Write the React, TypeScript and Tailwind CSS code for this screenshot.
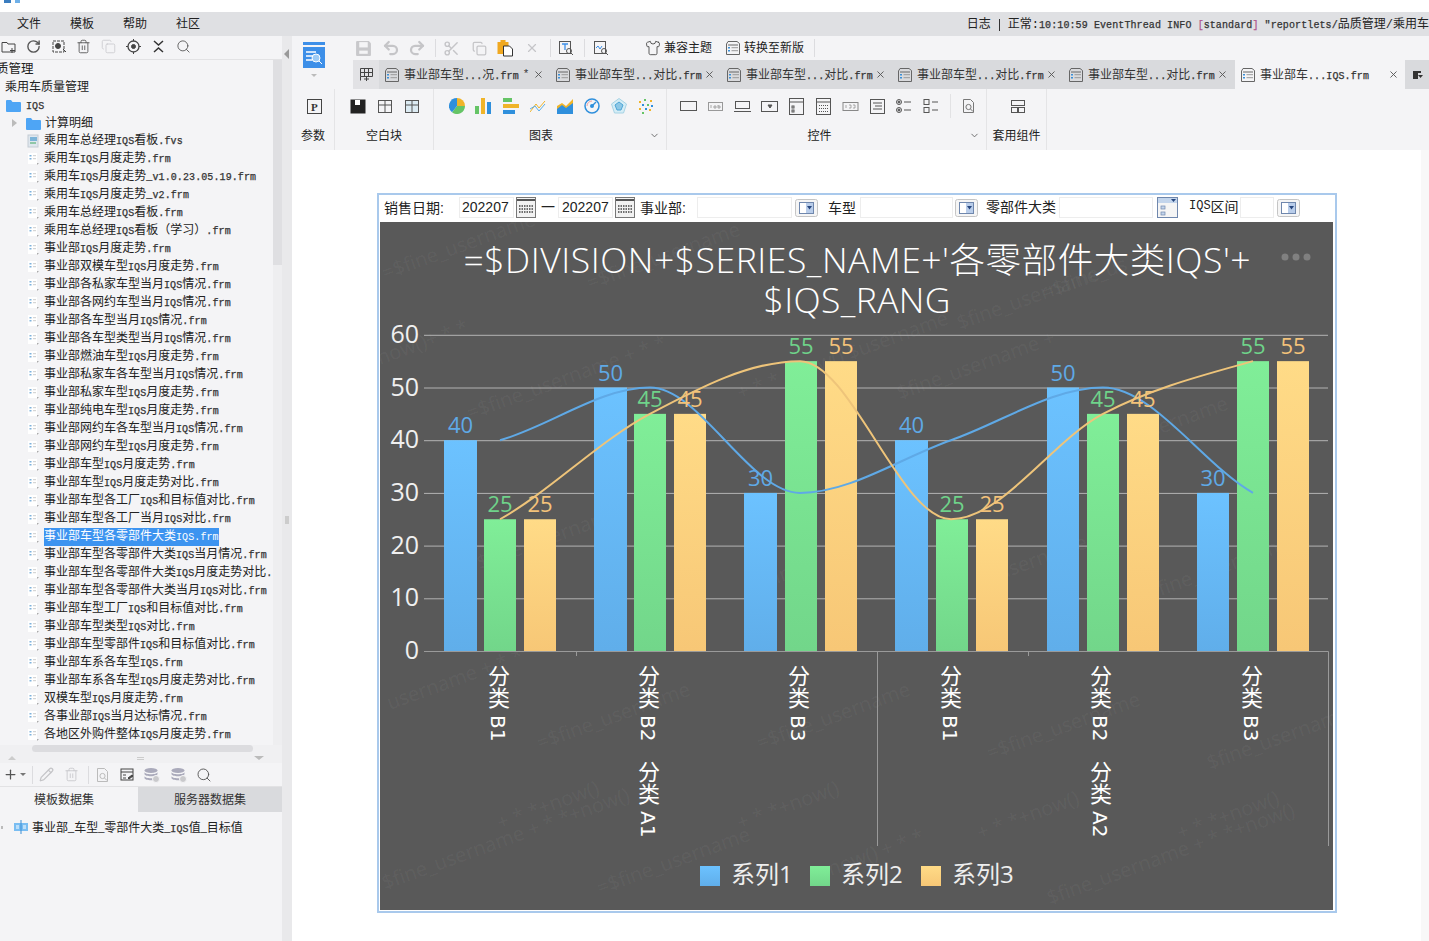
import React from "react";
import { RotateCw, Trash2, Copy, Search, X, Undo2, Redo2, Scissors, Pencil, ChevronDown, Plus, Shirt } from "lucide-react";

const UI = `"Liberation Mono","Noto Sans CJK SC",monospace`;

function T({ s }: { s: string }) {
  const parts = s.split(/([\x20-\x7e]+)/).filter(Boolean);
  return (
    <>
      {parts.map((p, i) =>
        /^[\x20-\x7e]+$/.test(p) ? (
          <span key={i} className="whitespace-pre text-[10px] tracking-[0.1px] text-[#333] [-webkit-text-stroke:0.25px_#333]">{p}</span>
        ) : (
          <span key={i}>{p}</span>
        )
      )}
    </>
  );
}

const files = [
  "乘用车总经理IQS看板.fvs","乘用车IQS月度走势.frm","乘用车IQS月度走势_v1.0.23.05.19.frm","乘用车IQS月度走势_v2.frm","乘用车总经理IQS看板.frm","乘用车总经理IQS看板（学习）.frm","事业部IQS月度走势.frm","事业部双模车型IQS月度走势.frm","事业部各私家车型当月IQS情况.frm","事业部各网约车型当月IQS情况.frm","事业部各车型当月IQS情况.frm","事业部各车型类型当月IQS情况.frm","事业部燃油车型IQS月度走势.frm","事业部私家车各车型当月IQS情况.frm","事业部私家车型IQS月度走势.frm","事业部纯电车型IQS月度走势.frm","事业部网约车各车型当月IQS情况.frm","事业部网约车型IQS月度走势.frm","事业部车型IQS月度走势.frm","事业部车型IQS月度走势对比.frm","事业部车型各工厂IQS和目标值对比.frm","事业部车型各工厂当月IQS对比.frm","事业部车型各零部件大类IQS.frm","事业部车型各零部件大类IQS当月情况.frm","事业部车型各零部件大类IQS月度走势对比.","事业部车型各零部件大类当月IQS对比.frm","事业部车型工厂IQS和目标值对比.frm","事业部车型类型IQS对比.frm","事业部车型零部件IQS和目标值对比.frm","事业部车系各车型IQS.frm","事业部车系各车型IQS月度走势对比.frm","双模车型IQS月度走势.frm","各事业部IQS当月达标情况.frm","各地区外购件整体IQS月度走势.frm",
];

function Folder() {
  return (
    <svg width="15" height="13" viewBox="0 0 15 13" className="shrink-0">
      <path d="M0 2a1 1 0 0 1 1-1h4l1.5 2H14a1 1 0 0 1 1 1v8a1 1 0 0 1-1 1H1a1 1 0 0 1-1-1z" fill="#4ea5f5" />
    </svg>
  );
}
function FileIco({ fvs }: { fvs?: boolean }) {
  return (
    <svg width="13" height="14" viewBox="0 0 13 14" className="shrink-0">
      {fvs ? (
        <>
          <rect x="1" y="1" width="10" height="12" fill="#dfe7ee" stroke="#c4ccd4" />
          <rect x="3" y="3" width="7" height="4" fill="#7db4d8" />
          <rect x="3" y="8" width="6" height="2" fill="#8fc7a8" />
        </>
      ) : (
        <>
          <rect x="1" y="1" width="9" height="11" fill="#fff" />
          <rect x="2.5" y="3" width="2" height="1.5" fill="#7fb2dc" />
          <rect x="2.5" y="6" width="2" height="1.5" fill="#7fb2dc" />
          <path d="M6 3.7h3M6 6.7h3" stroke="#ccc" />
          <path d="M10 11l2 0-2 2z" fill="#aaa" />
        </>
      )}
    </svg>
  );
}
function TabIco() {
  return (
    <svg width="16" height="16" viewBox="0 0 16 16" className="shrink-0" fill="none">
      <path d="M1.5 4V14.5H14.5V3.5L12 1.5H3L1.5 4" stroke="#666" />
      <path d="M3 5H13" stroke="#666" />
      <rect x="3" y="7" width="2" height="1.5" fill="#3b8fd8" />
      <rect x="3" y="10" width="2" height="1.5" fill="#3b8fd8" />
      <path d="M6.5 7.7H13M6.5 10.7H13" stroke="#999" />
    </svg>
  );
}
function Cell({ w = "w-[25px]", children }: { w?: string; children: React.ReactNode }) {
  return <span className={`flex shrink-0 items-center justify-center ${w}`}>{children}</span>;
}
function Sep() {
  return <span className="h-[18px] w-px shrink-0 bg-[#dcdcdf]" />;
}
function Doc({ c = "#777" }: { c?: string }) {
  return (
    <svg width="15" height="16" viewBox="0 0 15 16" fill="none" stroke={c}>
      <path d="M2.5 1.5H9.5L12.5 4.5V14.5H2.5z" />
      <circle cx="7.5" cy="9" r="2.6" />
      <path d="M9.5 11l2.5 2.5" />
    </svg>
  );
}
function Db({ c = "#aab" }: { c?: string }) {
  return (
    <svg width="17" height="16" viewBox="0 0 17 16">
      <ellipse cx="8" cy="3.5" rx="6.5" ry="2.5" fill={c} />
      <path d="M1.5 5c0 3 13 3 13 0v2c0 3-13 3-13 0zM1.5 9c0 3 13 3 13 0v2c0 3-13 3-13 0z" fill={c} />
      <circle cx="13" cy="12" r="3.5" fill="#c9c9cc" stroke="#f4f4f6" />
    </svg>
  );
}
function Lay({ kind }: { kind: number }) {
  return (
    <svg width="16" height="15" viewBox="0 0 16 15" fill="none" stroke="#555">
      <rect x="1.5" y="1.5" width="13" height="12" fill={kind === 2 ? "#dcebf3" : "none"} />
      {kind === 0 ? <rect x="1" y="1" width="14" height="13" fill="#222" stroke="#222" /> : null}
      {kind === 0 ? <rect x="5" y="1" width="5" height="5" fill="#fff" stroke="none" /> : null}
      {kind > 0 ? <path d="M1.5 6H14.5M8 1.5V13.5" /> : null}
    </svg>
  );
}

const Pie = () => (
  <svg width="16" height="16" viewBox="0 0 16 16">
    <path d="M8 8V0A8 8 0 0 1 16 8z" fill="#f0b429" />
    <path d="M8 8H16A8 8 0 0 1 3 14.2z" fill="#65c466" />
    <path d="M8 8L3 14.2A8 8 0 0 1 8 0z" fill="#2f8fdc" />
  </svg>
);
const Bars = () => (
  <svg width="17" height="16" viewBox="0 0 17 16">
    <rect x="0" y="8" width="4" height="8" fill="#65c466" />
    <rect x="6" y="0" width="4" height="16" fill="#f0b429" />
    <rect x="12" y="4" width="4" height="12" fill="#2f8fdc" />
  </svg>
);
const HBars = () => (
  <svg width="17" height="16" viewBox="0 0 17 16">
    <rect x="0" y="0" width="9" height="4" fill="#65c466" />
    <rect x="0" y="6" width="16" height="4" fill="#f0b429" />
    <rect x="0" y="12" width="12" height="4" fill="#2f8fdc" />
  </svg>
);
const LineI = () => (
  <svg width="16" height="14" viewBox="0 0 16 14" fill="none">
    <path d="M0 13L6 5 9 9 15 2" stroke="#f0b429" />
    <path d="M0 10L5 7 9 12 15 5" stroke="#5aaee8" />
  </svg>
);
const Area = () => (
  <svg width="17" height="16" viewBox="0 0 17 16">
    <path d="M0 8L5 5 9 8 16 1V16H0z" fill="#f0b429" />
    <path d="M0 11L5 7 9 10 16 5V16H0z" fill="#2f8fdc" />
  </svg>
);
const Gauge = () => (
  <svg width="16" height="16" viewBox="0 0 16 16" fill="none">
    <circle cx="8" cy="8" r="7" stroke="#2f8fdc" strokeWidth="1.5" />
    <circle cx="8" cy="8" r="2" fill="#2f8fdc" />
    <path d="M8 8L12 4" stroke="#2f8fdc" strokeWidth="1.5" />
    <path d="M3 8a5 5 0 0 1 5-5" stroke="#f0a0a0" />
  </svg>
);
const Radar = () => (
  <svg width="16" height="16" viewBox="0 0 16 16">
    <path d="M8 0.5L15.5 6 12.5 15H3.5L0.5 6z" fill="#d5edf6" stroke="#a6d2e4" />
    <path d="M8 4L12 7 10 12H6L4 7z" fill="#8ec8e6" stroke="#4ea5d6" />
  </svg>
);
const Scatter = () => (
  <svg width="16" height="16" viewBox="0 0 16 16">
    {[[2,3,"#f0b429"],[7,1,"#65c466"],[13,2,"#f0b429"],[5,6,"#2f8fdc"],[10,6,"#65c466"],[14,7,"#2f8fdc"],[2,10,"#f0b429"],[8,10,"#2f8fdc"],[12,11,"#f0b429"],[5,14,"#65c466"]].map(([x,y,c],i)=>(
      <rect key={i} x={x as number} y={y as number} width="2" height="2" fill={c as string} />
    ))}
  </svg>
);

function Ctl({ k }: { k: number }) {
  const s = "#555";
  return (
    <svg width="17" height="17" viewBox="0 0 17 17" fill="none" stroke={s}>
      {k === 0 && <rect x="0.5" y="3.5" width="16" height="9" />}
      {k === 1 && <><rect x="1.5" y="4.5" width="14" height="8" stroke="#999" /><path d="M4 7v3M7 8h2v2H7zM11 7v3h2V8h-2" stroke="#888" strokeWidth=".7" /></>}
      {k === 2 && <><rect x="1.5" y="3.5" width="14" height="7" /><path d="M0 13.5H17" /></>}
      {k === 3 && <><rect x="0.5" y="3.5" width="16" height="10" /><path d="M7 7h4l-2 3z" fill={s} /></>}
      {k === 4 && <><rect x="1.5" y="0.5" width="14" height="16" /><path d="M1.5 4H15.5" /><rect x="4" y="8" width="2" height="2" /><rect x="4" y="12" width="2" height="2" /></>}
      {k === 5 && <><rect x="1.5" y="0.5" width="14" height="16" /><path d="M1.5 4H15.5" /><path d="M4 7.5h9M4 10.5h9M4 13.5h9" strokeDasharray="1 1" /></>}
      {k === 6 && <><rect x="1" y="4.5" width="15" height="8" stroke="#888" /><path d="M4 7v3M7 7h2v3H7M11 7h2v3h-2" stroke="#888" strokeWidth=".7" /></>}
      {k === 7 && <><rect x="1.5" y="1.5" width="14" height="14" /><path d="M4 5h9M6 8h7M4 11h9" /></>}
      {k === 8 && <><circle cx="3" cy="4" r="2.5" /><circle cx="3" cy="4" r="1" fill={s} /><circle cx="3" cy="12" r="2.5" /><circle cx="3" cy="12" r="1" fill={s} /><path d="M8 4h7M8 12h7" /></>}
      {k === 9 && <><rect x="1" y="1.5" width="5" height="5" /><rect x="1" y="9.5" width="5" height="5" /><path d="M9 4h6M9 12h6" /></>}
    </svg>
  );
}

function TabItem({ label, star }: { label: string; star?: boolean }) {
  return (
    <div className="flex h-full w-[171px] shrink-0 items-center pl-[4px] text-[12px] text-[#333]">
      <TabIco />
      <span className="ml-[4px] whitespace-nowrap pt-[2px]"><T s={label} /></span>
      {star ? <span className="ml-[4px] text-[11px]">*</span> : null}
      <X size={11} className="ml-auto mr-[7px] text-[#555]" />
    </div>
  );
}

function CalBtn() {
  return (
    <svg width="20" height="21" viewBox="0 0 20 21" fill="none" className="shrink-0">
      <rect x="0.5" y="0.5" width="19" height="20" fill="#f2f2f2" stroke="#777" />
      <path d="M1 3h18" stroke="#555" strokeWidth="2" />
      <path d="M3 9h14M3 12h14M3 15h14" stroke="#444" strokeDasharray="1.5 1" strokeWidth="1.5" />
    </svg>
  );
}
function Combo() {
  return (
    <svg width="23" height="18" viewBox="0 0 23 18" className="shrink-0">
      <rect x="0.5" y="0.5" width="22" height="17" rx="2" fill="#f5f5f5" stroke="#c5c5c5" />
      <rect x="4.5" y="3.5" width="14" height="11" fill="#fff" stroke="#6f87ad" />
      <rect x="11" y="4" width="7" height="10" fill="#b9cdea" />
      <path d="M12 7h5l-2.5 3.5z" fill="#26467e" />
    </svg>
  );
}
function TreeBtn() {
  return (
    <svg width="21" height="21" viewBox="0 0 21 21" className="shrink-0">
      <rect x="0.5" y="0.5" width="20" height="20" fill="#f5f5f5" stroke="#6f87ad" />
      <rect x="1" y="1" width="19" height="5" fill="#c3d5ec" />
      <path d="M14 2h5l-2.5 3z" fill="#26467e" />
      <rect x="4" y="9" width="4" height="3" fill="#c3d5ec" stroke="#6f87ad" strokeWidth=".7" />
      <rect x="4" y="15" width="4" height="3" fill="#c3d5ec" stroke="#6f87ad" strokeWidth=".7" />
    </svg>
  );
}

function smooth(pts: number[][]) {
  const n = pts.length;
  const sec = pts.slice(1).map((p, i) => (p[1] - pts[i][1]) / (p[0] - pts[i][0]));
  const m = pts.map((_, i) => {
    if (i === 0) return sec[0] * 0.8;
    if (i === n - 1) return sec[n - 2] * 0.8;
    return sec[i - 1] * sec[i] <= 0 ? 0 : (sec[i - 1] + sec[i]) / 2;
  });
  let d = `M${pts[0][0]} ${pts[0][1]}`;
  for (let i = 0; i < n - 1; i++) {
    const dx = (pts[i + 1][0] - pts[i][0]) / 3;
    d += `C${pts[i][0] + dx} ${pts[i][1] + m[i] * dx} ${pts[i + 1][0] - dx} ${pts[i + 1][1] - m[i + 1] * dx} ${pts[i + 1][0]} ${pts[i + 1][1]}`;
  }
  return d;
}

const Y0 = 651;
const yOf = (v: number) => Y0 - v * 5.27;
const groups = [
  { xs: [444, 484, 524], ws: [33, 32, 32], v: [40, 25, 25], lab: [["分类 ", "B1"]], cx: 498 },
  { xs: [594, 634, 674], ws: [33, 32, 32], v: [50, 45, 45], lab: [["分类 ", "B2"], ["分类 ", "A1"]], cx: 648 },
  { xs: [744, 785, 825], ws: [33, 32, 32], v: [30, 55, 55], lab: [["分类 ", "B3"]], cx: 798 },
  { xs: [895, 936, 976], ws: [33, 32, 32], v: [40, 25, 25], lab: [["分类 ", "B1"]], cx: 950 },
  { xs: [1047, 1087, 1127], ws: [32, 32, 32], v: [50, 45, 45], lab: [["分类 ", "B2"], ["分类 ", "A2"]], cx: 1100 },
  { xs: [1197, 1237, 1277], ws: [32, 32, 32], v: [30, 55, 55], lab: [["分类 ", "B3"]], cx: 1251 },
];
const lineX = [500, 650, 800, 951, 1103, 1253];
const labelC = ["#5fa9e6", "#6fd38a", "#f3c27a"];
const CF = `"Open Sans","Noto Sans CJK SC",sans-serif`;
const wm = [
  [385, 280, "=$fine_username + * *"], [590, 290, "=$fine_username"], [1045, 300, "=$fine_us"], [380, 365, "now()+ * *"],
  [470, 420, "=$fine_username + * *"], [740, 400, "+ * * +now() $username"], [960, 330, "$fine_username"],
  [1130, 445, "$username"], [900, 400, "$fine_username +"], [480, 570, "$fine_username"], [760, 590, "$fine"],
  [1000, 580, "username"], [1150, 600, "$fine_username"], [390, 710, "username + * *"], [540, 750, "=$fine_username"],
  [760, 750, "=$fine_username"], [990, 760, "=$fine_username"], [1210, 770, "$fine_username"], [385, 890, "$fine_username + * *+now()"],
  [600, 895, "=$fine_username"], [820, 880, "+now() + * *"], [1050, 905, "$fine_username + * *+now()"], [500, 830, "+ * *+now()"],
  [740, 830, "+ * *+now()"], [980, 840, "+ * *+now()"], [1180, 840, "+ * *+now()"],
];

function Chart() {
  return (
    <svg viewBox="380 222 953 688" width="953" height="688" className="block bg-[#595959]" style={{ fontFamily: CF }}>
      <defs>
        <linearGradient id="g0" x1="0" y1="0" x2="0" y2="1"><stop offset="0" stopColor="#6cc2ff" /><stop offset="1" stopColor="#60aeea" /></linearGradient>
        <linearGradient id="g1" x1="0" y1="0" x2="0" y2="1"><stop offset="0" stopColor="#80ee98" /><stop offset="1" stopColor="#72d68a" /></linearGradient>
        <linearGradient id="g2" x1="0" y1="0" x2="0" y2="1"><stop offset="0" stopColor="#ffdb87" /><stop offset="1" stopColor="#f7c776" /></linearGradient>
      </defs>
      {wm.map(([x, y, t], i) => (
        <text key={i} x={x} y={y} fontSize="20" fill="#ffffff" fillOpacity="0.05" transform={`rotate(-20 ${x} ${y})`}>{t}</text>
      ))}
      <text x="857" y="273" textAnchor="middle" fontSize="35.5" fontWeight="300" fill="#fff" textLength="787" lengthAdjust="spacing">=$DIVISION+$SERIES_NAME+'各零部件大类IQS'+</text>
      <text x="857" y="313" textAnchor="middle" fontSize="35.5" fontWeight="300" fill="#fff" textLength="187" lengthAdjust="spacing">$IQS_RANG</text>
      <circle cx="1285" cy="257" r="3.5" fill="#808080" /><circle cx="1296" cy="257" r="3.5" fill="#808080" /><circle cx="1307" cy="257" r="3.5" fill="#808080" />
      {[10, 20, 30, 40, 50, 60].map((v) => (
        <path key={v} d={`M424 ${yOf(v) + 0.5}H1328`} stroke="#b3b3b3" />
      ))}
      {[0, 10, 20, 30, 40, 50, 60].map((v) => (
        <text key={v} x="419" y={yOf(v) + 8} textAnchor="end" fontSize="25" fill="#f0f0f0">{v}</text>
      ))}
      {groups.map((g, gi) => (
        <g key={gi}>
          {g.v.map((v, i) => (
            <rect key={i} x={g.xs[i]} y={yOf(v)} width={g.ws[i]} height={Y0 - yOf(v)} fill={`url(#g${i})`} />
          ))}
        </g>
      ))}
      <path d="M424 651.5H1328.5V846M877.5 651V846M576.5 651V656M1028.5 651V656" stroke="#9a9a9a" fill="none" />
      <path d={smooth(lineX.map((x, i) => [x, yOf(groups[i].v[0])]))} fill="none" stroke="#5fa9e6" strokeWidth="2" />
      <path d={smooth(lineX.map((x, i) => [x, yOf(groups[i].v[2])]))} fill="none" stroke="#eec47a" strokeWidth="2" />
      {groups.map((g, gi) => (
        <g key={gi}>
          {g.v.map((v, i) => (
            <text key={i} x={g.xs[i] + g.ws[i] / 2} y={yOf(v) - 7} textAnchor="middle" fontSize="22" fill={labelC[i]}>{v}</text>
          ))}
          {g.lab.map((t, i) => (
            <text key={i} x={g.cx} y={i === 0 ? 665 : 761} fontSize="22" fill="#fff" className="[writing-mode:vertical-rl]">
              {t[0]}
              <tspan fontSize="20" fontFamily="DejaVu Sans">{t[1]}</tspan>
            </text>
          ))}
        </g>
      ))}
      {[[700, "系列1", 0], [810, "系列2", 1], [921, "系列3", 2]].map(([x, t, i]) => (
        <g key={t as string}>
          <rect x={x as number} y="866" width="20" height="20" fill={`url(#g${i})`} />
          <text x={(x as number) + 31} y="883" fontSize="24" fill="#eee">{t}</text>
        </g>
      ))}
    </svg>
  );
}

function FormBar() {
  const txt = "text-[14px] text-[#222] whitespace-nowrap shrink-0";
  const input = "h-[21px] shrink-0 border border-[#ededed] bg-white";
  return (
    <div className="flex h-[25px] items-center bg-white pl-[4px] [font-family:'Liberation_Sans','Noto_Sans_CJK_SC',sans-serif]">
      <span className={`${txt} w-[75px] pt-[2px]`}>销售日期:</span>
      <span className={`${input} flex w-[55px] items-center pl-[2px] ${txt}`}>202207</span>
      <span className="w-[2px] shrink-0" />
      <CalBtn />
      <span className={`${txt} w-[38px] pl-[5px]`}>一</span>
      <span className={`${input} -ml-[16px] flex w-[55px] items-center pl-[3px] ${txt}`}>202207</span>
      <span className="w-[2px] shrink-0" />
      <CalBtn />
      <span className={`${txt} ml-[5px] w-[57px] pt-[2px]`}>事业部:</span>
      <span className={`${input} w-[95px]`} />
      <span className="w-[3px] shrink-0" />
      <Combo />
      <span className={`${txt} ml-[10px] w-[32px] pt-[2px]`}>车型</span>
      <span className={`${input} w-[93px]`} />
      <span className="w-[2px] shrink-0" />
      <Combo />
      <span className={`${txt} ml-[8px] w-[73px]`}>零部件大类</span>
      <span className={`${input} w-[94px]`} />
      <span className="w-[4px] shrink-0" />
      <TreeBtn />
      <span className={`${txt} ml-[11px] flex w-[51px]`}><span className="text-[12px] [font-family:'Liberation_Mono']">IQS</span>区间</span>
      <span className={`${input} w-[34px]`} />
      <span className="w-[3px] shrink-0" />
      <Combo />
    </div>
  );
}

export default function App() {
  const tabLabels = ["事业部车型...况.frm", "事业部车型...对比.frm", "事业部车型...对比.frm", "事业部车型...对比.frm", "事业部车型...对比.frm"];
  return (
    <div className="flex h-[941px] w-[1429px] flex-col overflow-hidden bg-white" style={{ fontFamily: UI }}>
      <div className="flex h-[12px] shrink-0 gap-[4px] overflow-hidden pl-[4px]">
        <span className="h-[3px] w-[7px] bg-[#3b7dbf]" />
        <span className="h-[3px] w-[5px] bg-[#6fb0e8]" />
      </div>
      <div className="flex h-[24px] shrink-0 items-center bg-[#dfe0e3] pt-[1px] text-[12px] text-[#222]">
        <span className="ml-[17px] w-[53px]">文件</span>
        <span className="w-[53px]">模板</span>
        <span className="w-[53px]">帮助</span>
        <span>社区</span>
        <span className="ml-auto flex items-center whitespace-nowrap pl-2 text-[#222]">
          <span>日志</span>
          <span className="mx-[8px] h-[12px] w-px bg-[#333]" />
          <span>
            正常:<T s="10:10:59 EventThread INFO " /><span className="text-[10px] text-[#b0568f] [-webkit-text-stroke:0.25px_#b0568f]">[</span><T s="standard" /><span className="text-[10px] text-[#b0568f] [-webkit-text-stroke:0.25px_#b0568f]">]</span><T s={' "reportlets/'} />品质管理/乘用车
          </span>
        </span>
      </div>

      <div className="flex min-h-0 flex-1">
        {/* left */}
        <div className="flex w-[282px] shrink-0 flex-col bg-[#f4f4f6]">
          <div className="-ml-[4px] flex h-[24px] shrink-0 items-center border-b border-[#e2e2e4] pb-[2px] text-[#555]">
            <Cell>
              <svg width="16" height="14" viewBox="0 0 16 14" fill="none" stroke="#444"><path d="M1 2.5H6L7 4H14V12H1z" /><path d="M11 8v5M9 10.5h5" /></svg>
            </Cell>
            <Cell><RotateCw size={15} strokeWidth={2.2} /></Cell>
            <Cell>
              <svg width="16" height="15" viewBox="0 0 16 15" fill="none" stroke="#444"><rect x="2" y="2" width="11" height="11" strokeDasharray="3 1" /><circle cx="7" cy="7" r="2.5" fill="#444" /><path d="M12 10l3 3" /></svg>
            </Cell>
            <Cell><Trash2 size={15} strokeWidth={1.4} /></Cell>
            <Cell><Copy size={15} strokeWidth={1.3} className="text-[#c9c9cc]" /></Cell>
            <Cell>
              <svg width="15" height="15" viewBox="0 0 15 15" fill="none" stroke="#444"><circle cx="7.5" cy="7.5" r="5.5" strokeWidth="1.3" /><circle cx="7.5" cy="7.5" r="2" fill="#444" /><path d="M7.5 0v2M7.5 13v2M0 7.5h2M13 7.5h2" /></svg>
            </Cell>
            <Cell>
              <svg width="11" height="13" viewBox="0 0 11 13" fill="none" stroke="#333" strokeWidth="1.5"><path d="M1 1l4.5 4 4.5-4M1 12l4.5-4 4.5 4" /></svg>
            </Cell>
            <Cell><Search size={15} strokeWidth={1.4} /></Cell>
          </div>
          <div className="flex min-h-0 h-[685px] shrink-0">
            <div className="min-w-0 flex-1 overflow-hidden text-[12px] text-[#222]">
              <div className="-ml-[4px] flex h-[18px] items-center overflow-hidden whitespace-nowrap pt-[2px] text-[12.5px]">质管理</div>
              <div className="flex h-[18px] items-center pl-[5px] pt-[2px]">乘用车质量管理</div>
              <div className="flex h-[18px] items-center gap-[5px] pl-[6px]"><Folder /><span className="pt-[1px]"><T s="IQS" /></span></div>
              <div className="flex h-[18px] items-center pl-[12px]">
                <span className="mr-[9px] h-0 w-0 border-y-[4px] border-l-[5px] border-y-transparent border-l-[#bbb]" />
                <Folder /><span className="ml-[4px] pt-[2px]">计算明细</span>
              </div>
              {files.map((f, i) => (
                <div key={i} className="flex h-[18px] items-center whitespace-nowrap pl-[27px]">
                  <FileIco fvs={i === 0} />
                  <span className={`ml-[4px] pt-[1px] leading-[16px] ${i === 22 ? "bg-[#3d94f0] text-white [&_span]:text-white [&_span]:[-webkit-text-stroke:0px]" : ""}`}><T s={f} /></span>
                </div>
              ))}
            </div>
            <div className="w-[9px] shrink-0 bg-[#eeeef0]">
              <div className="h-[205px] w-full bg-[#dfdfe2]" />
            </div>
          </div>
          <div className="h-[8px] shrink-0 bg-[#f0f0f2] pl-[32px]">
            <div className="h-[7px] w-[221px] rounded bg-[#dcdcdf]" />
          </div>
          <div className="flex h-[10px] shrink-0 items-center justify-between bg-[#f0f0f2] px-[8px]">
            <span className="h-0 w-0 border-x-[4px] border-b-[4px] border-x-transparent border-b-[#ccc]" />
            <span className="h-[3px] w-[7px] border-y border-[#ccc]" />
            <span className="h-0 w-0 -translate-x-[10px] border-x-[5px] border-t-[4px] border-x-transparent border-t-[#bbb]" />
          </div>
          <div className="-ml-[4px] flex h-[24px] shrink-0 items-center border-b border-[#e2e2e4] text-[#555]">
            <Cell w="w-[36px]"><Plus size={15} strokeWidth={2} /><span className="ml-[2px] h-0 w-0 border-x-[3px] border-t-[3px] border-x-transparent border-t-[#777]" /></Cell>
            <Sep />
            <Cell w="w-[26px]"><Pencil size={15} className="text-[#c4c4c7]" /></Cell>
            <Cell><Trash2 size={15} strokeWidth={1.3} className="text-[#c4c4c7]" /></Cell>
            <span className="w-[4px]" /><Sep />
            <Cell w="w-[27px]"><Doc c="#bbb" /></Cell>
            <Cell w="w-[22px]">
              <svg width="15" height="15" viewBox="0 0 15 15" fill="none" stroke="#444"><rect x="1" y="2" width="12" height="11" /><path d="M1 5h12M3 8h3M3 11h3" /><path d="M8 11l4-3 1 1-4 3z" fill="#444" /></svg>
            </Cell>
            <Cell w="w-[27px]"><Db /></Cell>
            <Cell w="w-[26px]"><Db /></Cell>
            <Cell><Search size={16} strokeWidth={1.4} /></Cell>
          </div>
          <div className="flex h-[25px] shrink-0 text-[12px] text-[#333]">
            <div className="flex w-[138px] items-center justify-center pr-[10px] pt-[2px]">模板数据集</div>
            <div className="flex flex-1 items-center justify-center bg-[#d9dadd] pt-[2px]">服务器数据集</div>
          </div>
          <div className="flex h-[30px] shrink-0 items-center text-[12px] text-[#222] whitespace-nowrap">
            <span className="ml-[1px] mr-[11px] h-[3px] w-[2px] bg-[#bbb]" />
            <svg width="14" height="14" viewBox="0 0 14 14" className="mr-[4px]">
              <rect x="0" y="3" width="14" height="8" fill="#79bdf2" />
              <path d="M7 0V14" stroke="#3a8fd6" />
              <path d="M2 6h3M2 8h3M9 6h3M9 8h3" stroke="#fff" />
            </svg>
            <span className="pt-[3px]"><T s="事业部_车型_零部件大类_IQS值_目标值" /></span>
          </div>
        </div>
        <div className="relative w-[10px] shrink-0 bg-[#e9e9eb]">
          <span className="absolute left-[2px] top-[13px] h-0 w-0 border-y-[5px] border-r-[5px] border-y-transparent border-r-[#999]" />
          <span className="absolute left-[3px] top-[480px] h-[8px] w-[4px] bg-[#ccc]" />
        </div>

        {/* right */}
        <div className="flex min-w-0 flex-1 flex-col">
          <div className="flex h-[114px] shrink-0 flex-col bg-[#f4f4f6]">
            <div className="flex h-[53px] shrink-0">
              <div className="flex w-[48px] shrink-0 flex-col items-center pt-[5px] pr-[4px]">
                <svg width="24" height="37" viewBox="0 0 24 37">
                  <rect x="1" y="1" width="22" height="3" fill="#3d8fe8" />
                  <rect x="1" y="6" width="22" height="21" fill="#3d8fe8" />
                  <path d="M4 11h10M4 15h8M4 19h6" stroke="#fff" strokeWidth="1.4" />
                  <circle cx="14" cy="17" r="4" fill="#9ecbf5" stroke="#fff" />
                  <path d="M17 20l3 3" stroke="#fff" />
                  <path d="M9 33h6l-3 3z" fill="#bbb" />
                </svg>
              </div>
              <div className="flex min-w-0 flex-1 flex-col">
                <div className="flex h-[24px] shrink-0 items-center pl-[9px] text-[#c5c5c8]">
                  <Cell w="w-[28px]">
                    <svg width="17" height="17" viewBox="0 0 16 16"><path d="M1 2a1 1 0 0 1 1-1h11l2 2v11a1 1 0 0 1-1 1H2a1 1 0 0 1-1-1z" fill="#c8c8cb" /><rect x="4" y="2" width="8" height="5" fill="#f4f4f6" /><rect x="4" y="10" width="8" height="3" fill="#f4f4f6" /></svg>
                  </Cell>
                  <Cell w="w-[28px]"><Undo2 size={18} strokeWidth={3} /></Cell>
                  <Cell w="w-[24px]"><Redo2 size={18} strokeWidth={3} /></Cell>
                  <span className="w-[6px] shrink-0" />
                  <Sep />
                  <Cell w="w-[30px]"><Scissors size={17} /></Cell>
                  <Cell w="w-[26px]"><Copy size={15} /></Cell>
                  <Cell w="w-[26px]">
                    <svg width="17" height="17" viewBox="0 0 16 17"><rect x="0" y="2" width="11" height="12" fill="#f0a820" /><rect x="3" y="0" width="5" height="3" fill="#f0a820" /><path d="M6 6H12L15 9V16H6z" fill="#fff" stroke="#333" /></svg>
                  </Cell>
                  <Cell w="w-[28px]"><X size={14} /></Cell>
                  <span className="w-[4px] shrink-0" />
                  <Sep />
                  <Cell w="w-[30px]">
                    <svg width="16" height="16" viewBox="0 0 16 16" fill="none" stroke="#555"><rect x="1.5" y="1.5" width="11" height="12" /><path d="M4 4h6M7 4v6" stroke="#3d8fe8" strokeWidth="1.3" /><circle cx="11" cy="11" r="2.5" /><path d="M13 13l2 2" /></svg>
                  </Cell>
                  <span className="w-[3px] shrink-0" />
                  <Sep />
                  <Cell w="w-[32px]">
                    <svg width="16" height="16" viewBox="0 0 16 16" fill="none" stroke="#555"><rect x="1.5" y="1.5" width="11" height="12" /><path d="M3 8l2-2 2 3 2-3" stroke="#3d8fe8" /><circle cx="11" cy="11" r="2.5" /><path d="M13 13l2 2" /></svg>
                  </Cell>
                  <span className="w-[28px] shrink-0" />
                  <Shirt size={16} strokeWidth={1.3} className="shrink-0 text-[#444]" />
                  <span className="ml-[3px] w-[61px] shrink-0 whitespace-nowrap pt-[2px] text-[12px] text-[#222]">兼容主题</span>
                  <TabIco />
                  <span className="ml-[3px] w-[70px] shrink-0 whitespace-nowrap pt-[2px] text-[12px] text-[#222]">转换至新版</span>
                  <Sep />
                </div>
                <div className="ml-[13px] flex h-[29px] shrink-0 items-center bg-[#d9dadd]">
                  <div className="flex h-full w-[26px] shrink-0 items-center justify-center bg-[#e2e2e5]">
                    <svg width="15" height="15" viewBox="0 0 15 15" fill="none" stroke="#444"><path d="M1.5 1.5h12v8h-12zM1.5 5.5h12M5.5 1.5v8M9.5 1.5v8M1.5 9.5v4M5 12h5M7.5 10v4" /></svg>
                  </div>
                  <span className="h-full w-px shrink-0" />
                  {tabLabels.map((t, i) => <TabItem key={i} label={t} star={i === 0} />)}
                  <div className="flex h-full w-[170px] shrink-0 items-center bg-[#f4f4f6] pl-[5px] text-[12px] text-[#333]">
                    <TabIco />
                    <span className="ml-[4px] whitespace-nowrap pt-[2px]"><T s="事业部车...IQS.frm" /></span>
                    <X size={11} className="ml-auto mr-[6px] text-[#555]" />
                  </div>
                  <div className="flex flex-1 items-center justify-center">
                    <svg width="11" height="10" viewBox="0 0 11 10"><rect x="1" y="1" width="5" height="8" fill="#333" /><rect x="6" y="1" width="3" height="2" fill="#333" /><path d="M6 5h5L8.5 8z" fill="#333" /></svg>
                  </div>
                </div>
              </div>
            </div>
            <div className="flex h-[61px] shrink-0 text-[12px] text-[#222]">
              <Group w="w-[43px]" label="参数">
                <svg width="15" height="15" viewBox="0 0 15 15" fill="none" stroke="#444"><rect x="0.5" y="0.5" width="14" height="14" /><text x="4" y="11.5" fontSize="11" fontWeight="bold" fill="#333" stroke="none" fontFamily="Liberation Serif">P</text></svg>
              </Group>
              <Group w="w-[99px]" label="空白块">
                <div className="flex gap-[11px]"><Lay kind={0} /><Lay kind={1} /><Lay kind={2} /></div>
              </Group>
              <Group w="w-[233px]" label="图表" chev pr="pr-[18px]">
                <div className="flex items-center gap-[10.5px]"><Pie /><Bars /><HBars /><LineI /><Area /><Gauge /><Radar /><Scatter /></div>
              </Group>
              <Group w="w-[320px]" label="控件" chev pr="pr-[14px]">
                <div className="flex items-center gap-[10px]">
                  {[0, 1, 2, 3, 4, 5, 6, 7, 8, 9].map((k) => <Ctl key={k} k={k} />)}
                  <span className="h-[24px] w-px bg-[#e2e2e4]" />
                  <Doc />
                </div>
              </Group>
              <Group w="w-[60px]" label="套用组件">
                <svg width="16" height="15" viewBox="0 0 16 15" fill="none" stroke="#555"><rect x="1.5" y="1.5" width="13" height="5" /><rect x="1.5" y="8.5" width="6" height="5" /><rect x="8.5" y="8.5" width="6" height="5" /></svg>
              </Group>
            </div>
          </div>
          <div className="flex min-h-0 flex-1 bg-white">
            <div className="min-w-0 flex-1 pl-[85px] pt-[43px]">
              <div className="w-[960px] border-2 border-[#a9c9ec] pl-px pb-px">
                <FormBar />
                <div className="mt-[2px] w-[953px]"><Chart /></div>
              </div>
            </div>
            <div className="w-[8px] shrink-0 bg-[#f8f8f8]" />
          </div>
        </div>
      </div>
    </div>
  );
}

function Group({ w, label, chev, pr = "", children }: { w: string; label: string; chev?: boolean; pr?: string; children: React.ReactNode }) {
  return (
    <div className={`relative flex shrink-0 flex-col border-r border-[#e4e4e6] ${w}`}>
      <div className="flex h-[34px] items-center justify-center pl-[2px]">{children}</div>
      <div className={`flex h-[22px] items-center justify-center whitespace-nowrap pt-[6px] ${pr}`}>{label}</div>
      {chev ? <ChevronDown size={11} className="absolute bottom-[9px] right-[6px] text-[#666]" /> : null}
    </div>
  );
}
